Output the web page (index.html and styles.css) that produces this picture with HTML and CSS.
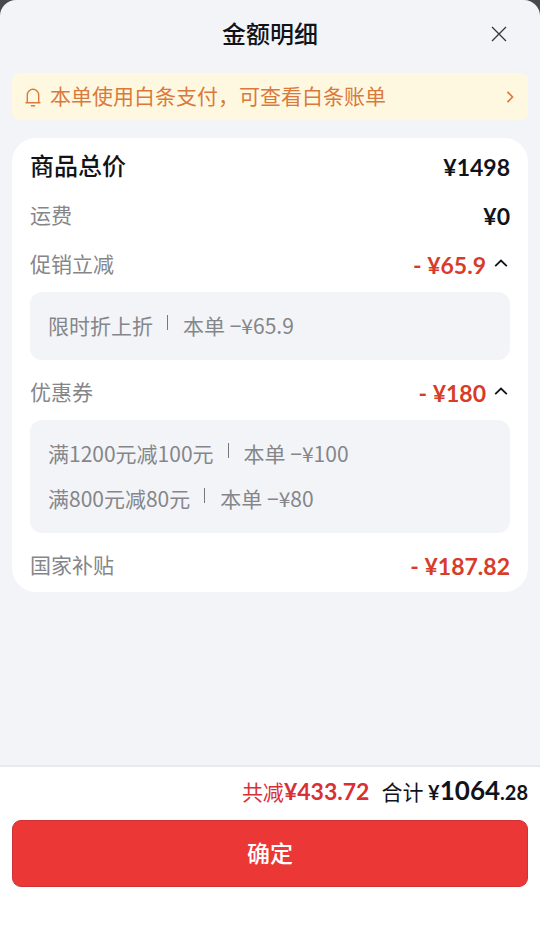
FILE: index.html
```html
<!DOCTYPE html>
<html lang="zh-CN">
<head>
<meta charset="utf-8">
<meta name="viewport" content="width=device-width, initial-scale=1">
<title>金额明细</title>
<link rel="stylesheet" href="styles.css">
</head>
<body>
<main class="sheet">
  <header class="header">
    <h1 class="title">金额明细</h1>
    <button class="close" type="button" aria-label="关闭">
      <svg width="16" height="16" viewBox="0 0 16 16" fill="none" stroke="currentColor" stroke-width="1.3"><path d="M1 1l14 14M15 1L1 15"/></svg>
    </button>
  </header>

  <a class="notice" href="#">
    <svg class="bell" width="18" height="20" viewBox="0 0 18 20" fill="none" stroke="currentColor" stroke-width="1.4" stroke-linecap="round" stroke-linejoin="round"><path d="M3.3 15.6V8a5.7 5.7 0 0 1 11.4 0v7.6M2 15.7h14M7.4 18.8h3.2"/></svg>
    <span class="notice-text">本单使用白条支付，可查看白条账单</span>
    <svg width="8" height="12" viewBox="0 0 8 12" fill="none" stroke="currentColor" stroke-width="1.7"><path d="M1.5 .8l5 5.2-5 5.2"/></svg>
  </a>

  <section class="card">
    <div class="row row-total"><h2 class="label">商品总价</h2><span class="amount">¥1498</span></div>
    <div class="row"><span class="label">运费</span><span class="amount">¥0</span></div>
    <div class="row">
      <span class="label">促销立减</span>
      <button class="amount minus toggle" type="button" aria-expanded="true">- ¥65.9
        <svg class="caret" width="14" height="9" viewBox="0 0 14 9" fill="none" stroke="currentColor" stroke-width="1.8"><path d="M1.2 7.2L7 1.5l5.8 5.7"/></svg>
      </button>
    </div>
    <ul class="details">
      <li class="detail"><span>限时折上折</span><i class="divider"></i><span>本单 −¥65.9</span></li>
    </ul>
    <div class="row">
      <span class="label">优惠券</span>
      <button class="amount minus toggle" type="button" aria-expanded="true">- ¥180
        <svg class="caret" width="14" height="9" viewBox="0 0 14 9" fill="none" stroke="currentColor" stroke-width="1.8"><path d="M1.2 7.2L7 1.5l5.8 5.7"/></svg>
      </button>
    </div>
    <ul class="details">
      <li class="detail"><span>满1200元减100元</span><i class="divider"></i><span>本单 −¥100</span></li>
      <li class="detail"><span>满800元减80元</span><i class="divider"></i><span>本单 −¥80</span></li>
    </ul>
    <div class="row"><span class="label">国家补贴</span><span class="amount minus">- ¥187.82</span></div>
  </section>

  <footer class="footer">
    <div class="summary">
      <span class="saved">共减<b class="num">¥433.72</b></span>
      <span class="payable">合计 <b class="num small">¥</b><b class="num large">1064</b><b class="num small">.28</b></span>
    </div>
    <button class="confirm" type="button">确定</button>
  </footer>
</main>
</body>
</html>
```

FILE: styles.css
```css
* {
  box-sizing: border-box;
}

body {
  margin: 0;
  background: #48494d;
  color: #11131a;
  font-family: "Noto Sans CJK SC", sans-serif;
  font-size: 21px;
  font-weight: 400;
  line-height: 32px;
}

button {
  padding: 0;
  border: 0;
  background: none;
  color: inherit;
  font: inherit;
  cursor: pointer;
}

svg {
  display: block;
  flex: none;
}

.sheet {
  display: flex;
  flex-direction: column;
  min-height: 100vh;
  overflow: hidden;
  border-radius: 16px 16px 0 0;
  background: #f3f4f8;
}

.header {
  display: grid;
  grid-template-columns: 1fr auto 1fr;
  align-items: center;
  padding: 16px 12px;
}

.title {
  grid-column: 2;
  margin: 0;
  padding-bottom: 2px;
  font-size: 24px;
  font-weight: 500;
  line-height: 34px;
}

.close {
  display: grid;
  place-items: center;
  justify-self: end;
  width: 58px;
  height: 36px;
  color: #33363c;
}

.notice {
  display: flex;
  align-items: center;
  gap: 8px;
  min-height: 47px;
  margin: 5px 12px 18px;
  padding: 0 14px 0 12px;
  border-radius: 8px;
  background: #fff8e1;
  color: #d97a3c;
  text-decoration: none;
}

.notice-text {
  flex: 1;
  padding-bottom: 3px;
}

.card {
  margin: 0 12px;
  padding: 4px 18px 2px;
  border-radius: 24px;
  background: #fff;
}

.row {
  display: flex;
  align-items: center;
  justify-content: space-between;
  min-height: 49px;
}

.label {
  margin: 0;
  padding-bottom: 3px;
  color: #858689;
}

.row-total .label {
  color: #11131a;
  font-size: 24px;
  font-weight: 500;
}

.amount,
.num {
  font-family: Lato, "Noto Sans CJK SC", sans-serif;
  font-size: 23px;
  font-weight: 700;
}

.minus {
  color: #d73c28;
}

.toggle {
  display: flex;
  align-items: center;
  gap: 8px;
}

.caret {
  margin: 0 2px 2px 0;
  color: #11131a;
}

.details {
  margin: 3px 0 8px;
  padding: 11px 18px 12px;
  border-radius: 12px;
  background: #f3f4f8;
  list-style: none;
}

.detail {
  display: flex;
  align-items: center;
  min-height: 45px;
  padding-bottom: 1px;
  color: #858689;
}

.divider {
  align-self: flex-start;
  width: 1px;
  height: 15px;
  margin: 12px 15px 0 14px;
  background: #77787b;
}

.footer {
  margin-top: auto;
  padding: 7px 12px 55px;
  border-top: 2px solid #e8eaec;
  background: #fff;
}

.summary {
  display: flex;
  align-items: baseline;
  justify-content: flex-end;
  gap: 12px;
  margin-bottom: 12px;
}

.saved {
  color: #d93036;
}

.num.small {
  font-size: 20px;
}

.num.large {
  font-size: 26px;
}

.confirm {
  display: block;
  width: 100%;
  height: 67px;
  padding-bottom: 3px;
  border: 1px solid #ce3237;
  border-radius: 9px;
  background: #eb3735;
  color: #fff;
  font-size: 23px;
  font-weight: 500;
}
```
